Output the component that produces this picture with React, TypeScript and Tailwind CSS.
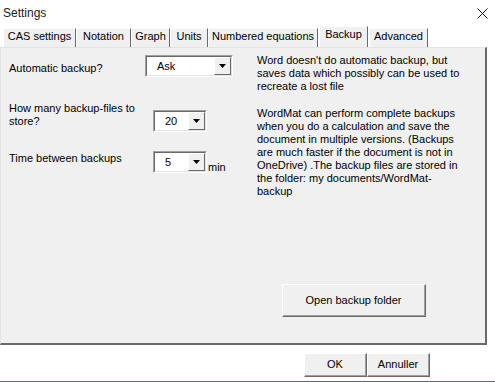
import React from "react";

const tabs = [
  { label: "CAS settings", w: 73 },
  { label: "Notation", w: 55 },
  { label: "Graph", w: 39 },
  { label: "Units", w: 38 },
  { label: "Numbered equations", w: 110 },
  { label: "Backup", w: 49, active: true },
  { label: "Advanced", w: 59 },
];

function Combo({ value, w }: { value: string; w: number }) {
  return (
    <div
      className="h-[22px] border-t border-l border-t-[#a0a0a0] border-l-[#a0a0a0] border-b border-r border-b-white border-r-white"
      style={{ width: w }}
    >
      <div className="h-full flex border-t border-l border-t-[#696969] border-l-[#696969] border-b border-r border-b-[#e3e3e3] border-r-[#e3e3e3] bg-white">
        <div className="flex-1 pl-[10px] leading-[18px] text-black">{value}</div>
        <div className="w-[17px] h-full bg-[#f0f0f0] border-t border-l border-white border-b border-r border-b-[#696969] border-r-[#696969] flex items-center justify-center">
          <svg width="7" height="4" viewBox="0 0 7 4">
            <path d="M0 0h7L3.5 4z" fill="#000" />
          </svg>
        </div>
      </div>
    </div>
  );
}

function Btn({ children, w, h }: { children: React.ReactNode; w: number; h: number }) {
  return (
    <div
      className="border-t border-l border-white border-b border-r border-b-[#696969] border-r-[#696969]"
      style={{ width: w, height: h }}
    >
      <div className="w-full h-full bg-[#f0f0f0] border-b border-r border-b-[#a0a0a0] border-r-[#a0a0a0] flex items-center justify-center text-black">
        {children}
      </div>
    </div>
  );
}

export default function App() {
  return (
    <div
      className="w-[495px] h-[382px] bg-white flex flex-col text-[11px] text-black overflow-hidden"
      style={{ fontFamily: '"Liberation Sans", Arial, sans-serif' }}
    >
      <div className="h-[26px] flex items-start justify-between pl-[3px] pr-[7px] pt-[4px]">
        <span className="text-[12px] text-[#1a1a1a]">Settings</span>
        <svg width="11" height="11" viewBox="0 0 11 11" className="mt-[4px]">
          <path d="M0.5 0.5L10.5 10.5M10.5 0.5L0.5 10.5" stroke="#111" strokeWidth="1" />
        </svg>
      </div>
      <div className="h-[21px] flex items-end pl-[3px]">
        {tabs.map((t, i) => (
          <div
            key={i}
            className={
              t.active
                ? "h-[21px] bg-[#f0f0f0] border-t border-l border-white border-r border-r-[#696969] flex items-start justify-center pt-0 leading-[14px] ml-[1px] mr-[1px]"
                : "h-[19px] bg-[#f0f0f0] border-t border-l border-white border-r border-r-[#696969] flex items-start justify-center pt-0 leading-[14px]"
            }
            style={{ width: t.w }}
          >
            {t.label}
          </div>
        ))}
      </div>
      <div className="w-[487px] h-[298px] bg-[#f0f0f0] border-t border-l border-[#e3e3e3] border-r-2 border-b-2 border-r-[#696969] border-b-[#696969] flex">
        <div className="w-[250px] pl-[8px] pt-[7px] flex flex-col">
          <div className="flex items-start h-[22px]">
            <span className="w-[136px] pt-[5px]">Automatic backup?</span>
            <Combo value="Ask" w={88} />
          </div>
          <div className="flex items-start mt-[25px]">
            <span className="w-[144px] leading-[13px]">How many backup-files to store?</span>
            <div className="pt-[8px]">
              <Combo value="20" w={54} />
            </div>
          </div>
          <div className="flex items-start mt-[19px]">
            <span className="w-[144px] leading-[13px] pt-[1px]">Time between backups</span>
            <Combo value="5" w={54} />
            <span className="self-end mb-[-2px] ml-[1px]">min</span>
          </div>
        </div>
        <div className="flex-1 flex flex-col pl-[6px] pt-[6px]">
          <p className="w-[220px] leading-[13px]">
            Word doesn't do automatic backup, but saves data which possibly can be used to recreate a lost file
          </p>
          <p className="w-[210px] leading-[13px] mt-[14px]">
            WordMat can perform complete backups when you do a calculation and save the document in multiple versions. (Backups are much faster if the document is not in OneDrive) .The backup files are stored in the folder: my documents/WordMat-backup
          </p>
          <div className="ml-[25px] mt-[86px]">
            <Btn w={144} h={33}>Open backup folder</Btn>
          </div>
        </div>
      </div>
      <div className="flex pl-[304px] pt-[8px]">
        <Btn w={63} h={24}>OK</Btn>
        <Btn w={63} h={24}>Annuller</Btn>
      </div>
      <div className="flex-1" />
      <div className="h-[1px] bg-[#2b79c6]" />
    </div>
  );
}
